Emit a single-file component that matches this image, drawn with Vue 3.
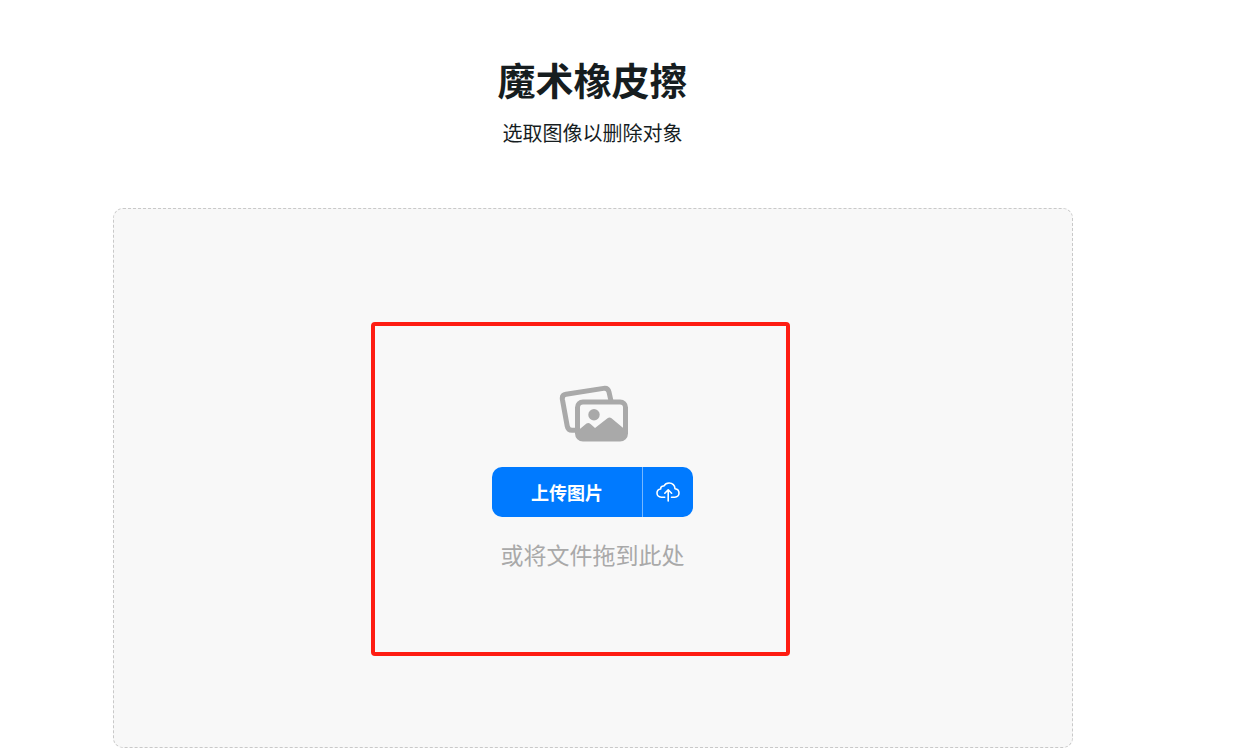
<script setup>
const title = '魔术橡皮擦'
const subtitle = '选取图像以删除对象'
</script>

<template>
  <main class="page">
    <header class="intro">
      <h1>{{ title }}</h1>
      <p>{{ subtitle }}</p>
    </header>
    <section class="dropzone" aria-label="上传图片">
      <svg class="pictures" viewBox="-1 1 70 58" aria-hidden="true">
        <path d="M52 17 L50 8 Q49 3.7 44.5 4.4 L7 10.3 Q2.7 11 3.4 15.5 L8.2 42 Q9 46.3 13 46.3 L18 46.3" fill="none" stroke="#a9a9a9" stroke-width="5" />
        <rect x="18.5" y="18" width="48" height="37" rx="5.5" fill="#f8f8f8" stroke="#a9a9a9" stroke-width="5" />
        <circle cx="35" cy="30.7" r="5.7" fill="#a9a9a9" />
        <path d="M19 46.5 L27.5 39.6 Q29.5 38.2 31.5 40 L36 44 L48.5 34.3 Q50.5 32.8 52.5 34.3 L66 45.5 V51 Q66 55 61 55 H24 Q19 55 19 50Z" fill="#a9a9a9" />
      </svg>
      <div class="upload">
        <button type="button" class="pick">上传图片</button>
        <button type="button" class="cloud" aria-label="从云端上传">
          <svg viewBox="0 0 24 20" fill="none" stroke="#fff" stroke-width="1.6" stroke-linecap="round" stroke-linejoin="round" aria-hidden="true">
            <path d="M8.7 15.2H5.2C2.8 15.2 1 13.4 1 11.1C1 8.9 2.6 7.2 4.7 7C4.5 5.1 6 3.7 8 4C9 2 10.9 1 13.1 1C16.5 1 19 3.5 19 6.7C21.3 7 23 8.8 23 11.1C23 13.4 21.2 15.2 18.9 15.2H15.5" />
            <path d="M12.2 19V8M8.8 11.2L12.2 7.8L15.6 11.2" />
          </svg>
        </button>
      </div>
      <p class="hint">或将文件拖到此处</p>
      <div class="highlight"></div>
    </section>
  </main>
</template>

<style>
body {
  background: #fff;
}
</style>

<style scoped>
.page {
  box-sizing: border-box;
  padding: 51px 65px 6px 0;
  font-family: "Noto Sans CJK SC", sans-serif;
  color: #161d1f;
}

.intro {
  text-align: center;
}

h1 {
  margin: 0;
  font-size: 38px;
  line-height: 56px;
  font-weight: 700;
}

.intro p {
  margin: 11px 0 0;
  font-size: 20px;
  line-height: 30px;
  font-weight: 400;
}

.dropzone {
  position: relative;
  box-sizing: border-box;
  max-width: 960px;
  margin: 60px auto 0;
  padding: 176px 0;
  display: flex;
  flex-direction: column;
  align-items: center;
  border: 1px dashed #c9c9c9;
  border-radius: 10px;
  background: #f8f8f8;
}

.pictures {
  width: 70px;
  height: 58px;
}

.upload {
  display: flex;
  height: 50px;
  margin-top: 24px;
  overflow: hidden;
  border-radius: 10px;
  background: #007aff;
}

button {
  margin: 0;
  padding: 0;
  border: 0;
  background: transparent;
  color: #fff;
  font-family: inherit;
  cursor: pointer;
}

.pick {
  width: 150px;
  font-size: 18px;
  line-height: 26px;
  font-weight: 700;
}

.cloud {
  width: 51px;
  display: flex;
  align-items: center;
  justify-content: center;
  border-left: 1px solid #75b7ff;
}

.cloud svg {
  width: 24px;
  height: 20px;
}

.hint {
  margin: 20px 0 0;
  color: #a9a9a9;
  font-size: 23px;
  line-height: 34px;
  font-weight: 400;
}

.highlight {
  position: absolute;
  top: 113px;
  left: calc(50% - 222px);
  box-sizing: border-box;
  width: 419px;
  height: 334px;
  border: 4px solid #fe1d12;
  border-radius: 4px;
  pointer-events: none;
}
</style>
